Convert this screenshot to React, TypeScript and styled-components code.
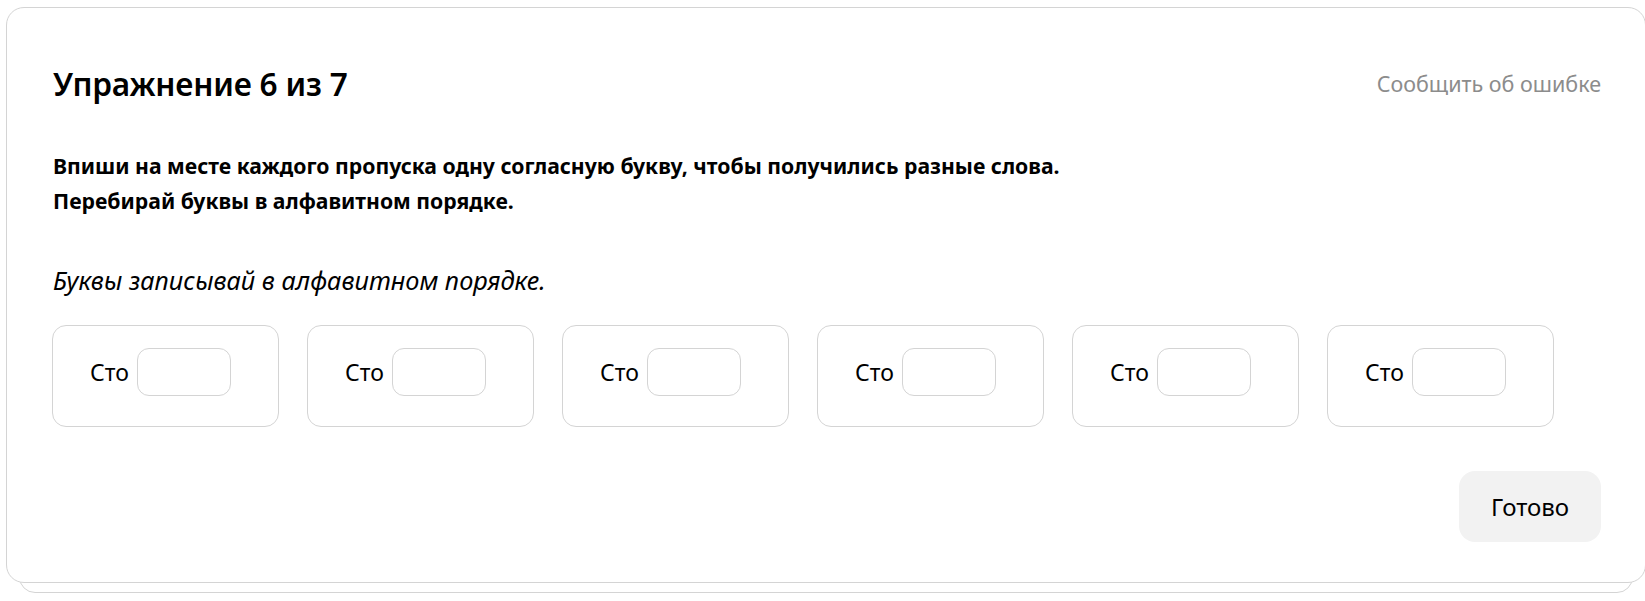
import React from "react";
import styled, { createGlobalStyle } from "styled-components";

const Global = createGlobalStyle`
  html {
    overflow: hidden;
  }
  body {
    margin: 0;
    padding: 0;
    background: #ffffff;
    font-family: "Noto Sans", "Open Sans", sans-serif;
    color: #000;
  }
`;

const Page = styled.div`
  padding: 7px 0 20px 6px;
  width: 1640px;
`;

const Card = styled.section`
  position: relative;
  box-sizing: border-box;
  width: 1640px;
  height: 576px;
  background: #fff;
  border: 1px solid #d4d4d4;
  border-radius: 18px;
  padding: 56px 44px 37px 45px;
  display: flex;
  flex-direction: column;

  &::before {
    content: "";
    position: absolute;
    left: 12px;
    right: 12px;
    top: 12px;
    bottom: -11px;
    border: 1px solid #d4d4d4;
    border-radius: 16px;
    background: #fff;
    z-index: -1;
  }
`;

const Header = styled.header`
  display: flex;
  align-items: center;
  justify-content: space-between;
  height: 40px;
`;

const Title = styled.h1`
  margin: 0 0 0 1px;
  font-size: 31.6px;
  line-height: 40px;
  font-weight: 600;
  letter-spacing: -0.2px;
`;

const ReportLink = styled.a`
  font-size: 21.5px;
  line-height: 40px;
  color: #8c8c8c;
  cursor: pointer;
`;

const Instruction = styled.p`
  margin: 44px 0 0 1px;
  font-size: 21.2px;
  line-height: 35px;
  font-weight: 700;
`;

const Hint = styled.p`
  margin: 46px 0 0 1px;
  font-size: 25.3px;
  line-height: 32px;
  font-style: italic;
`;

const Cells = styled.div`
  display: flex;
  gap: 28px;
  margin-top: 29px;
`;

const Cell = styled.div`
  box-sizing: border-box;
  width: 227px;
  height: 102px;
  border: 1px solid #d4d4d4;
  border-radius: 14px;
  display: flex;
  align-items: center;
  gap: 8px;
  padding: 0 0 8px 37px;
`;

const Word = styled.span`
  font-size: 23px;
  line-height: 30px;
`;

const LetterInput = styled.input`
  box-sizing: border-box;
  width: 94px;
  height: 48px;
  border: 1px solid #d4d4d4;
  border-radius: 12px;
  background: #fff;
  outline: none;
  font-family: inherit;
  font-size: 22px;
  text-align: center;
`;

const Footer = styled.div`
  display: flex;
  justify-content: flex-end;
  margin-top: 44px;
`;

const DoneButton = styled.button`
  width: 142px;
  height: 71px;
  border: none;
  border-radius: 16px;
  background: #f2f2f2;
  font-family: inherit;
  font-size: 24px;
  color: #000;
  cursor: pointer;
`;

export default function App() {
  const cells = Array.from({ length: 6 }, (_, i) => i);
  return (
    <>
      <Global />
      <Page>
        <Card>
          <Header>
            <Title>Упражнение 6 из 7</Title>
            <ReportLink>Сообщить об ошибке</ReportLink>
          </Header>
          <Instruction>
            Впиши на месте каждого пропуска одну согласную букву, чтобы получились разные слова.
            <br />
            Перебирай буквы в алфавитном порядке.
          </Instruction>
          <Hint>Буквы записывай в алфавитном порядке.</Hint>
          <Cells>
            {cells.map((i) => (
              <Cell key={i}>
                <Word>Сто</Word>
                <LetterInput aria-label={`Буква ${i + 1}`} />
              </Cell>
            ))}
          </Cells>
          <Footer>
            <DoneButton>Готово</DoneButton>
          </Footer>
        </Card>
      </Page>
    </>
  );
}
